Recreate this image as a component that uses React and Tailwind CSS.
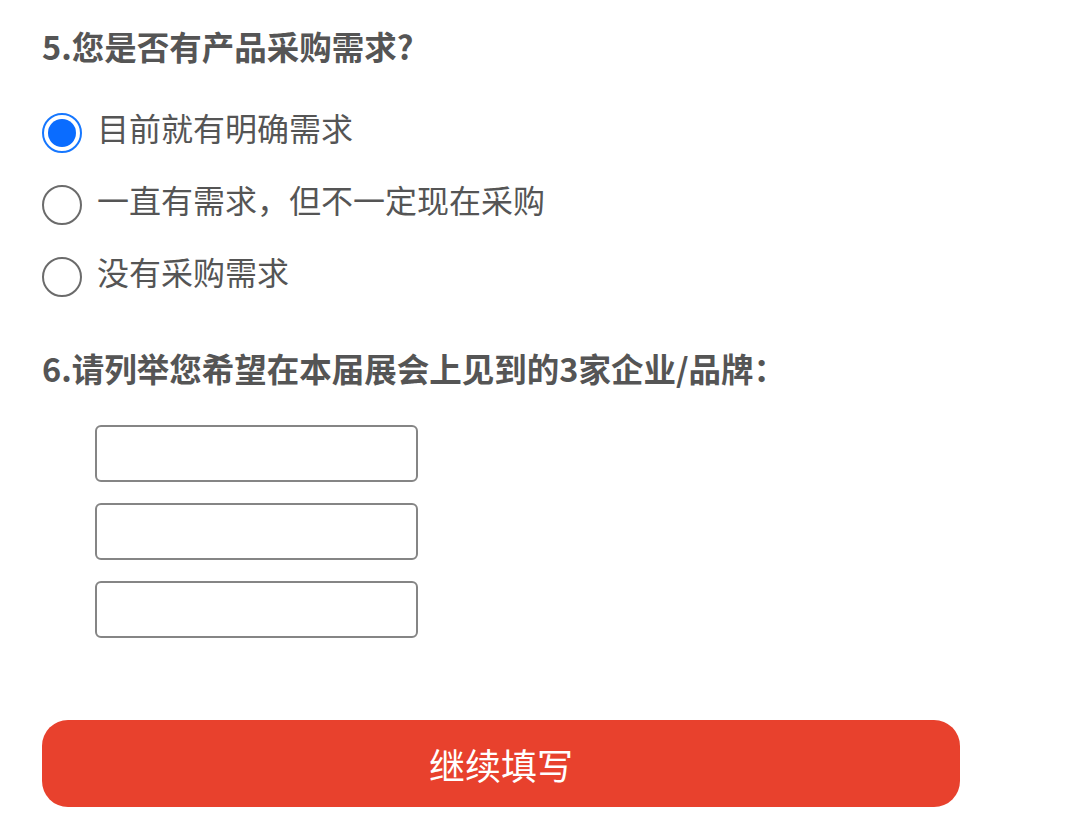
import { useState } from "react";

const options = ["目前就有明确需求", "一直有需求，但不一定现在采购", "没有采购需求"];

function Radio({ checked }) {
  if (checked) {
    return (
      <span className="flex h-[40px] w-[40px] shrink-0 items-center justify-center rounded-full border-[2.5px] border-[#1677ff] bg-white">
        <span className="h-[28px] w-[28px] rounded-full bg-[#0a6cff]"></span>
      </span>
    );
  }
  return <span className="h-[40px] w-[40px] shrink-0 rounded-full border-[2.5px] border-[#6b6b6b] bg-white"></span>;
}

export default function App() {
  const [picked, setPicked] = useState(0);
  const [brands, setBrands] = useState(["", "", ""]);

  return (
    <div
      className="min-h-screen bg-white px-[42px] pt-[28px] text-[#555]"
      style={{ fontFamily: '"Noto Sans CJK SC", "Noto Sans", sans-serif' }}
    >
      <h2 className="text-[32.5px] font-bold leading-[36px] text-[#555]">5.您是否有产品采购需求?</h2>

      <div className="mt-[33px] flex flex-col">
        {options.map((opt, i) => (
          <label key={i} className="flex h-[72px] cursor-pointer items-center" onClick={() => setPicked(i)}>
            <Radio checked={picked === i} />
            <span className="mb-[13px] ml-[15px] text-[32px] leading-[40px] text-[#555]">{opt}</span>
          </label>
        ))}
      </div>

      <h2 className="mt-[37px] text-[32.5px] font-bold leading-[36px] text-[#555]">
        6.请列举您希望在本届展会上见到的3家企业/品牌：
      </h2>

      <div className="ml-[53px] mt-[39px] flex flex-col gap-[21px]">
        {brands.map((b, i) => (
          <input
            key={i}
            value={b}
            onChange={(e) => {
              const next = [...brands];
              next[i] = e.target.value;
              setBrands(next);
            }}
            className="h-[57px] w-[323px] rounded-[6px] border-2 border-[#858585] bg-white px-3 text-[26px] outline-none"
          />
        ))}
      </div>

      <button className="mt-[82px] flex h-[87px] w-[918px] items-center justify-center rounded-[26px] bg-[#e8412d] text-[36px] text-white">
        继续填写
      </button>
    </div>
  );
}
